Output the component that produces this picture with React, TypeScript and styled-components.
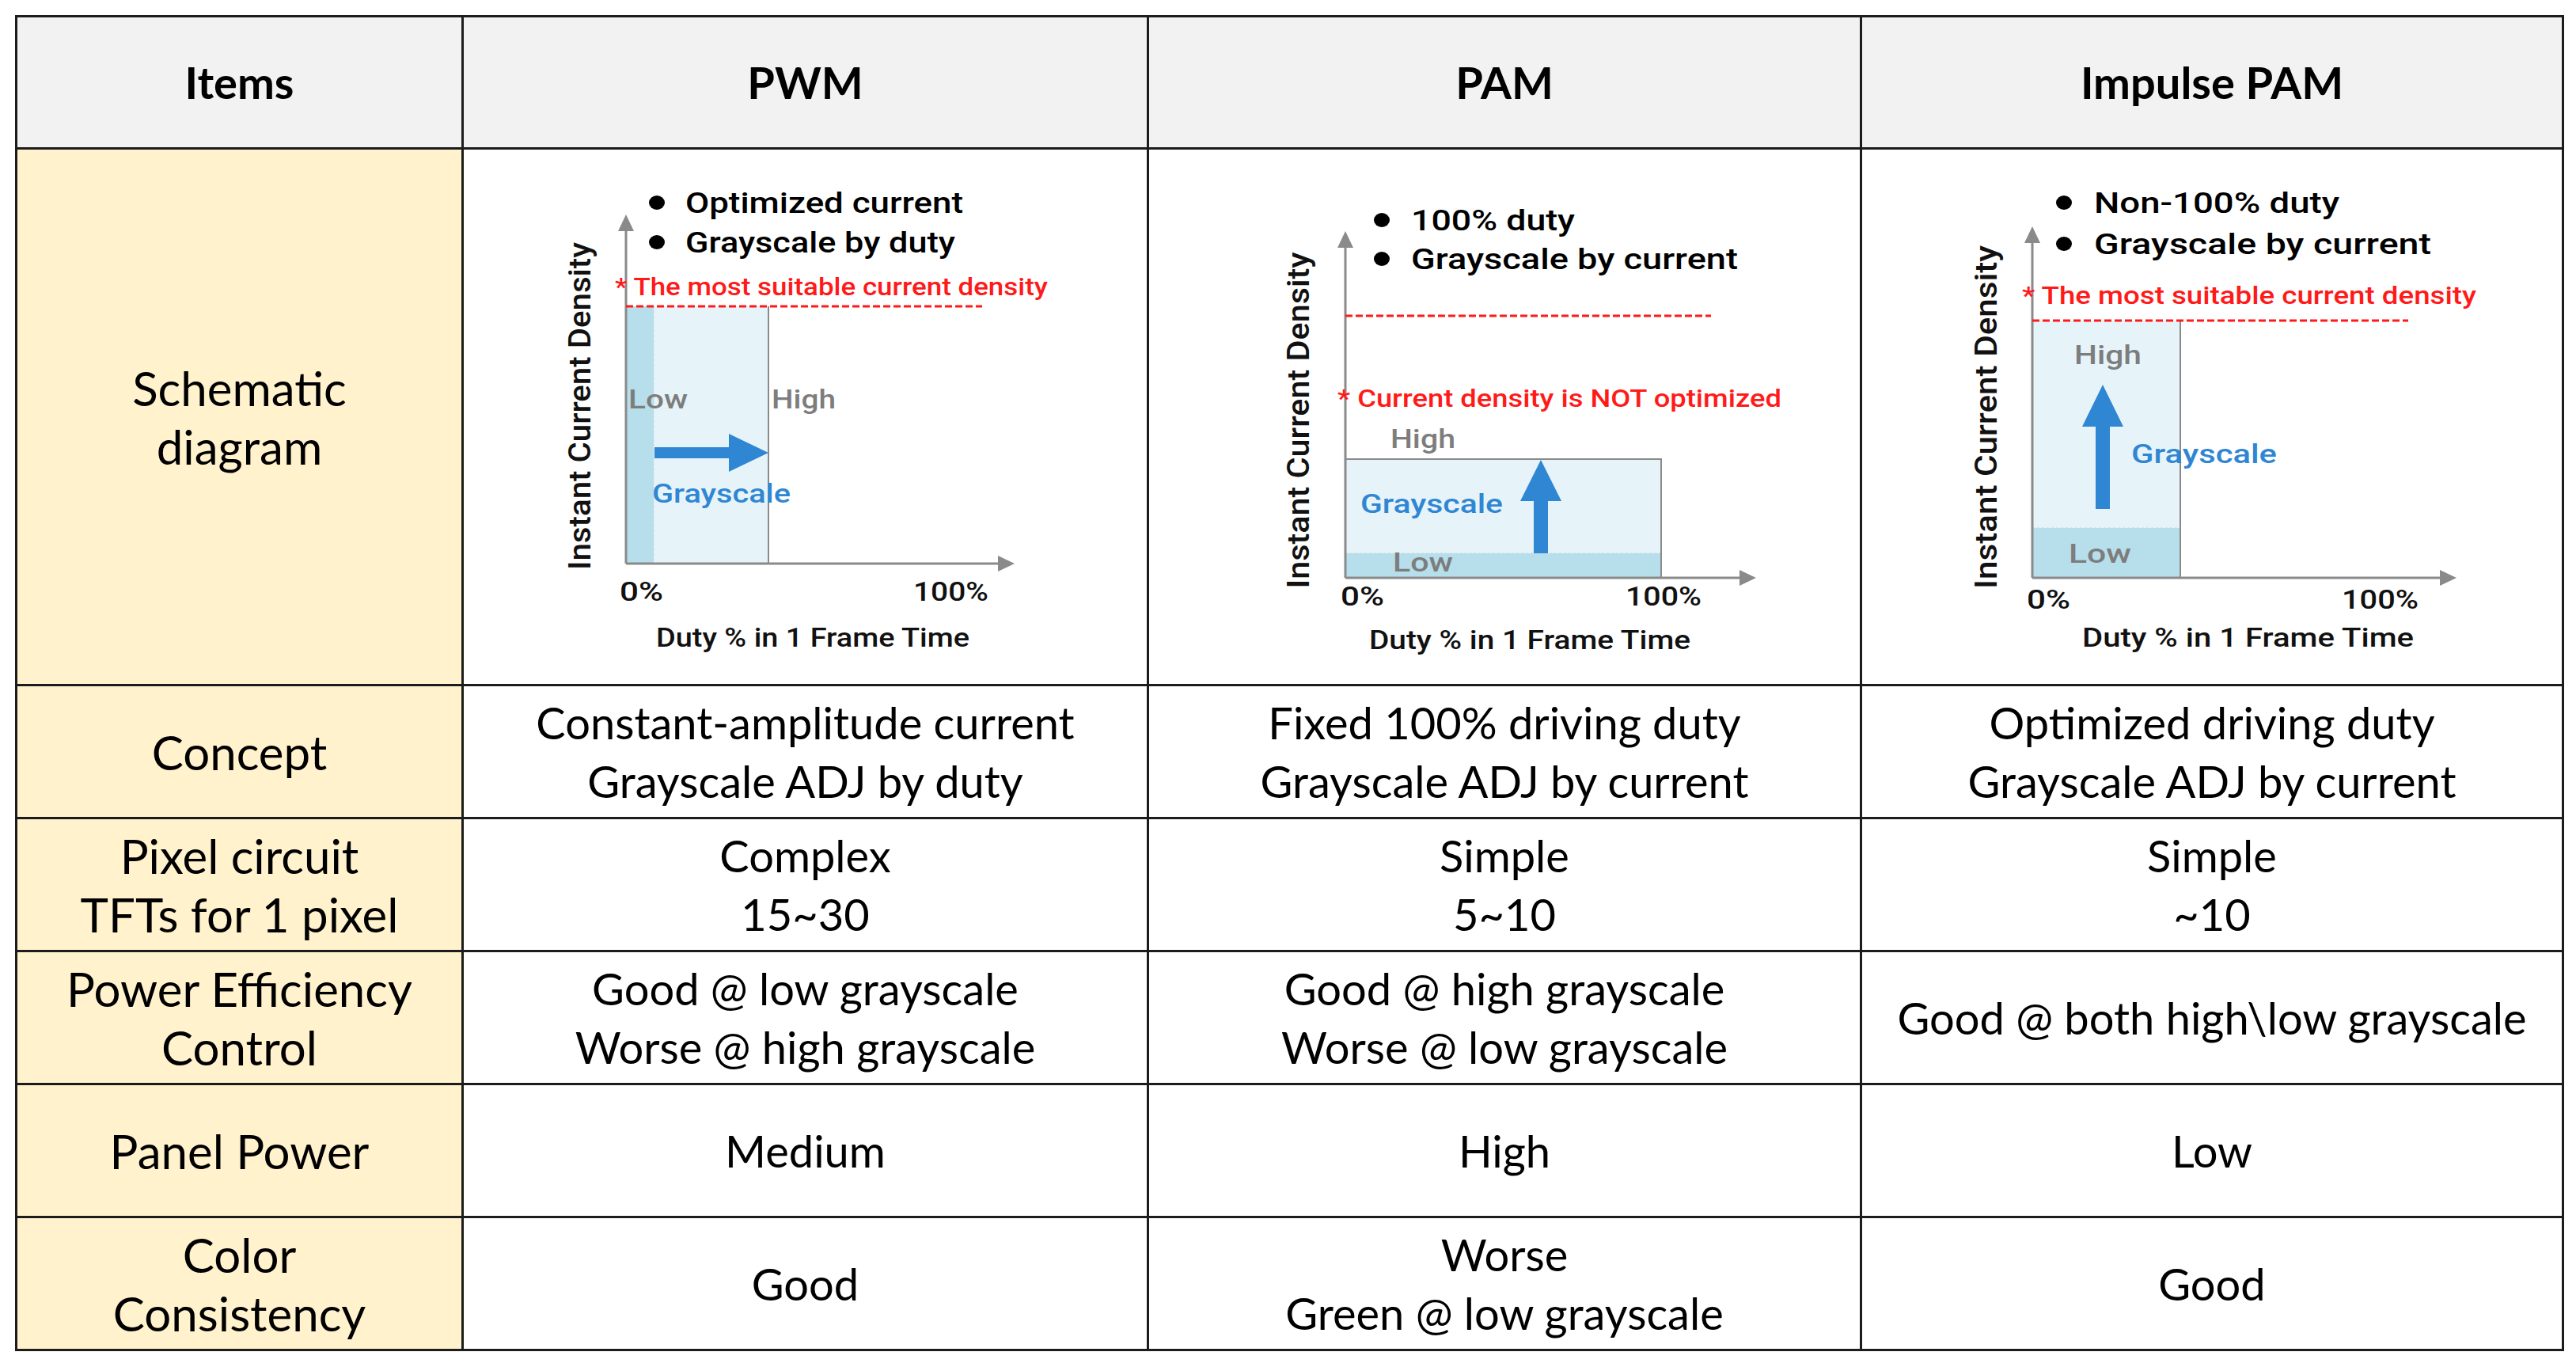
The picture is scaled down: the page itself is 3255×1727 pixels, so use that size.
import React from "react";
import styled, { createGlobalStyle } from "styled-components";

const GlobalStyle = createGlobalStyle`
  html, body {
    margin: 0;
    padding: 0;
    background: #ffffff;
  }
`;

const LINE = "#1c1c1c";
const AXIS = "#8a8a8a";
const FILL = "#e6f4f9";
const FILL_DARK = "#b6dfeb";
const BLUE = "#2f86d3";
const GRAY_TEXT = "#7d7d7d";
const RED = "#ff1a1a";

const Page = styled.div`
  padding: 19px 0 0 19px;
`;

const Table = styled.div`
  display: grid;
  grid-template-columns: 564px 866px 901px 887px;
  grid-template-rows: 167px 678px repeat(5, 168px);
  width: max-content;
  border-top: 3px solid ${LINE};
  border-left: 3px solid ${LINE};
`;

type Tone = "head" | "label" | "body";

const sizes: Record<Tone, number> = { head: 56, label: 60, body: 56 };

const Cell = styled.div<{ $tone: Tone }>`
  box-sizing: border-box;
  display: flex;
  flex-direction: column;
  align-items: center;
  justify-content: center;
  text-align: center;
  border-right: 3px solid ${LINE};
  border-bottom: 3px solid ${LINE};
  background: ${(p) =>
    p.$tone === "head" ? "#f2f2f2" : p.$tone === "label" ? "#fff2cc" : "#ffffff"};
  color: #000;
  font-family: Lato, "Liberation Sans", sans-serif;
  font-weight: ${(p) => (p.$tone === "head" ? 700 : 400)};
  font-size: ${(p) => sizes[p.$tone]}px;
  line-height: 74px;
  white-space: nowrap;
`;

const DiagramCell = styled(Cell)`
  align-items: stretch;
  justify-content: stretch;
`;

const Chart = styled.svg`
  display: block;
  width: 100%;
  height: 100%;
`;

const Txt = styled.text<{ $c?: string; $s?: number }>`
  font-family: Roboto, "Liberation Sans", sans-serif;
  font-weight: 500;
  font-size: ${(p) => p.$s ?? 33}px;
  fill: ${(p) => p.$c ?? "#111111"};
`;

type TProps = {
  x: number;
  y: number;
  len?: number;
  c?: string;
  s?: number;
  children: React.ReactNode;
};

const T = ({ x, y, len, c, s, children }: TProps) => (
  <Txt
    x={x}
    y={y}
    $c={c}
    $s={s}
    textLength={len}
    lengthAdjust={len ? "spacingAndGlyphs" : undefined}
  >
    {children}
  </Txt>
);

// axes: origin (ox, oy), y arrow tip at top, x arrow tip at right
const Axes = ({ ox, oy, top, right }: { ox: number; oy: number; top: number; right: number }) => (
  <g>
    <line x1={ox} y1={oy} x2={ox} y2={top + 18} stroke={AXIS} strokeWidth={3} />
    <polygon points={`${ox},${top} ${ox - 10},${top + 21} ${ox + 10},${top + 21}`} fill={AXIS} />
    <line x1={ox} y1={oy} x2={right - 18} y2={oy} stroke={AXIS} strokeWidth={3} />
    <polygon points={`${right},${oy} ${right - 21},${oy - 10} ${right - 21},${oy + 10}`} fill={AXIS} />
  </g>
);

const Bullets = ({
  cx,
  tx,
  rows,
}: {
  cx: number;
  tx: number;
  rows: { cy: number; base: number; text: string; len: number }[];
}) => (
  <g>
    {rows.map((r) => (
      <g key={r.text}>
        <ellipse cx={cx} cy={r.cy} rx={10} ry={9} fill="#000" />
        <T x={tx} y={r.base} s={36} len={r.len} c="#000">
          {r.text}
        </T>
      </g>
    ))}
  </g>
);

const YLabel = ({ x, cy, len }: { x: number; cy: number; len: number }) => (
  <Txt
    x={x}
    y={cy}
    $s={38}
    $c="#111"
    textAnchor="middle"
    transform={`rotate(-90 ${x} ${cy})`}
    textLength={len}
    lengthAdjust="spacingAndGlyphs"
  >
    Instant Current Density
  </Txt>
);

const Dashed = ({ x1, x2, y }: { x1: number; x2: number; y: number }) => (
  <line x1={x1} y1={y} x2={x2} y2={y} stroke={RED} strokeWidth={3} strokeDasharray="9 4" />
);

const UpArrow = ({ x, tip, headBase, bottom }: { x: number; tip: number; headBase: number; bottom: number }) => (
  <polygon
    points={`${x},${tip} ${x + 26},${headBase} ${x + 9},${headBase} ${x + 9},${bottom} ${x - 9},${bottom} ${x - 9},${headBase} ${x - 26},${headBase}`}
    fill={BLUE}
  />
);

const Diagram = ({ x0, w, children }: { x0: number; w: number; children: React.ReactNode }) => (
  <Chart viewBox={`${x0} 189 ${w - 3} 675`} preserveAspectRatio="none">
    {children}
  </Chart>
);

const PwmDiagram = () => (
  <Diagram x0={586} w={866}>
    <rect x={791} y={387} width={180} height={325} fill={FILL} />
    <rect x={791} y={387} width={35} height={325} fill={FILL_DARK} />
    <line x1={826} y1={387} x2={826} y2={712} stroke="#c9d9de" strokeWidth={1} strokeDasharray="3 3" />
    <line x1={971} y1={387} x2={971} y2={712} stroke={AXIS} strokeWidth={2} />
    <Axes ox={791} oy={712} top={271} right={1282} />
    <Bullets
      cx={830}
      tx={866}
      rows={[
        { cy: 256, base: 269, text: "Optimized current", len: 351 },
        { cy: 306, base: 319, text: "Grayscale by duty", len: 341 },
      ]}
    />
    <T x={777} y={373} s={31} c={RED} len={547}>
      * The most suitable current density
    </T>
    <Dashed x1={791} x2={1241} y={387} />
    <T x={794} y={516} c={GRAY_TEXT} len={75}>
      Low
    </T>
    <T x={975} y={516} c={GRAY_TEXT} len={81}>
      High
    </T>
    <polygon
      points="827,565 921,565 921,548 971,572 921,596 921,579 827,579"
      fill={BLUE}
    />
    <T x={824} y={635} c={BLUE} len={175}>
      Grayscale
    </T>
    <T x={783} y={759} len={55}>
      0%
    </T>
    <T x={1154} y={759} len={95}>
      100%
    </T>
    <T x={829} y={817} len={396}>
      Duty % in 1 Frame Time
    </T>
    <YLabel x={746} cy={513} len={414} />
  </Diagram>
);

const PamDiagram = () => (
  <Diagram x0={1452} w={901}>
    <rect x={1700} y={580} width={399} height={150} fill={FILL} />
    <rect x={1700} y={699} width={399} height={31} fill={FILL_DARK} />
    <line x1={1700} y1={699} x2={2099} y2={699} stroke="#c9d9de" strokeWidth={1} strokeDasharray="3 3" />
    <polyline points="1700,580 2099,580 2099,730" fill="none" stroke={AXIS} strokeWidth={2} />
    <Axes ox={1700} oy={730} top={292} right={2219} />
    <Bullets
      cx={1746}
      tx={1783}
      rows={[
        { cy: 278, base: 291, text: "100% duty", len: 207 },
        { cy: 327, base: 340, text: "Grayscale by current", len: 413 },
      ]}
    />
    <Dashed x1={1700} x2={2162} y={399} />
    <T x={1690} y={514} s={31} c={RED} len={561}>
      * Current density is NOT optimized
    </T>
    <T x={1757} y={566} c={GRAY_TEXT} len={82}>
      High
    </T>
    <T x={1719} y={648} c={BLUE} len={180}>
      Grayscale
    </T>
    <UpArrow x={1947} tip={581} headBase={633} bottom={699} />
    <T x={1760} y={722} c={GRAY_TEXT} len={76}>
      Low
    </T>
    <T x={1694} y={765} len={55}>
      0%
    </T>
    <T x={2054} y={765} len={96}>
      100%
    </T>
    <T x={1730} y={820} len={406}>
      Duty % in 1 Frame Time
    </T>
    <YLabel x={1654} cy={531} len={425} />
  </Diagram>
);

const ImpulseDiagram = () => (
  <Diagram x0={2353} w={887}>
    <rect x={2568} y={405} width={187} height={325} fill={FILL} />
    <rect x={2568} y={667} width={187} height={63} fill={FILL_DARK} />
    <line x1={2568} y1={667} x2={2755} y2={667} stroke="#c9d9de" strokeWidth={1} strokeDasharray="3 3" />
    <line x1={2755} y1={405} x2={2755} y2={730} stroke={AXIS} strokeWidth={2} />
    <Axes ox={2568} oy={730} top={286} right={3104} />
    <Bullets
      cx={2608}
      tx={2646}
      rows={[
        { cy: 256, base: 269, text: "Non-100% duty", len: 310 },
        { cy: 308, base: 321, text: "Grayscale by current", len: 426 },
      ]}
    />
    <T x={2555} y={384} s={31} c={RED} len={574}>
      * The most suitable current density
    </T>
    <Dashed x1={2568} x2={3043} y={405} />
    <T x={2621} y={460} c={GRAY_TEXT} len={85}>
      High
    </T>
    <UpArrow x={2657} tip={486} headBase={539} bottom={643} />
    <T x={2693} y={585} c={BLUE} len={184}>
      Grayscale
    </T>
    <T x={2614} y={711} c={GRAY_TEXT} len={79}>
      Low
    </T>
    <T x={2561} y={769} len={55}>
      0%
    </T>
    <T x={2959} y={769} len={97}>
      100%
    </T>
    <T x={2631} y={817} len={419}>
      Duty % in 1 Frame Time
    </T>
    <YLabel x={2523} cy={527} len={434} />
  </Diagram>
);

type Row = { label: string[]; cells: string[][] };

const rows: Row[] = [
  {
    label: ["Concept"],
    cells: [
      ["Constant-amplitude current", "Grayscale ADJ by duty"],
      ["Fixed 100% driving duty", "Grayscale ADJ by current"],
      ["Optimized driving duty", "Grayscale ADJ by current"],
    ],
  },
  {
    label: ["Pixel circuit", "TFTs for 1 pixel"],
    cells: [
      ["Complex", "15~30"],
      ["Simple", "5~10"],
      ["Simple", "~10"],
    ],
  },
  {
    label: ["Power Efficiency", "Control"],
    cells: [
      ["Good @ low grayscale", "Worse @ high grayscale"],
      ["Good @ high grayscale", "Worse @ low grayscale"],
      ["Good @ both high\\low grayscale"],
    ],
  },
  {
    label: ["Panel Power"],
    cells: [["Medium"], ["High"], ["Low"]],
  },
  {
    label: ["Color", "Consistency"],
    cells: [["Good"], ["Worse", "Green @ low grayscale"], ["Good"]],
  },
];

const Lines = ({ lines }: { lines: string[] }) => (
  <>
    {lines.map((l) => (
      <div key={l}>{l}</div>
    ))}
  </>
);

export default function App() {
  return (
    <Page>
      <GlobalStyle />
      <Table>
        <Cell $tone="head">Items</Cell>
        <Cell $tone="head">PWM</Cell>
        <Cell $tone="head">PAM</Cell>
        <Cell $tone="head">Impulse PAM</Cell>

        <Cell $tone="label">
          <Lines lines={["Schematic", "diagram"]} />
        </Cell>
        <DiagramCell $tone="body">
          <PwmDiagram />
        </DiagramCell>
        <DiagramCell $tone="body">
          <PamDiagram />
        </DiagramCell>
        <DiagramCell $tone="body">
          <ImpulseDiagram />
        </DiagramCell>

        {rows.map((r) => (
          <React.Fragment key={r.label.join(" ")}>
            <Cell $tone="label">
              <Lines lines={r.label} />
            </Cell>
            {r.cells.map((c, i) => (
              <Cell $tone="body" key={i}>
                <Lines lines={c} />
              </Cell>
            ))}
          </React.Fragment>
        ))}
      </Table>
    </Page>
  );
}
